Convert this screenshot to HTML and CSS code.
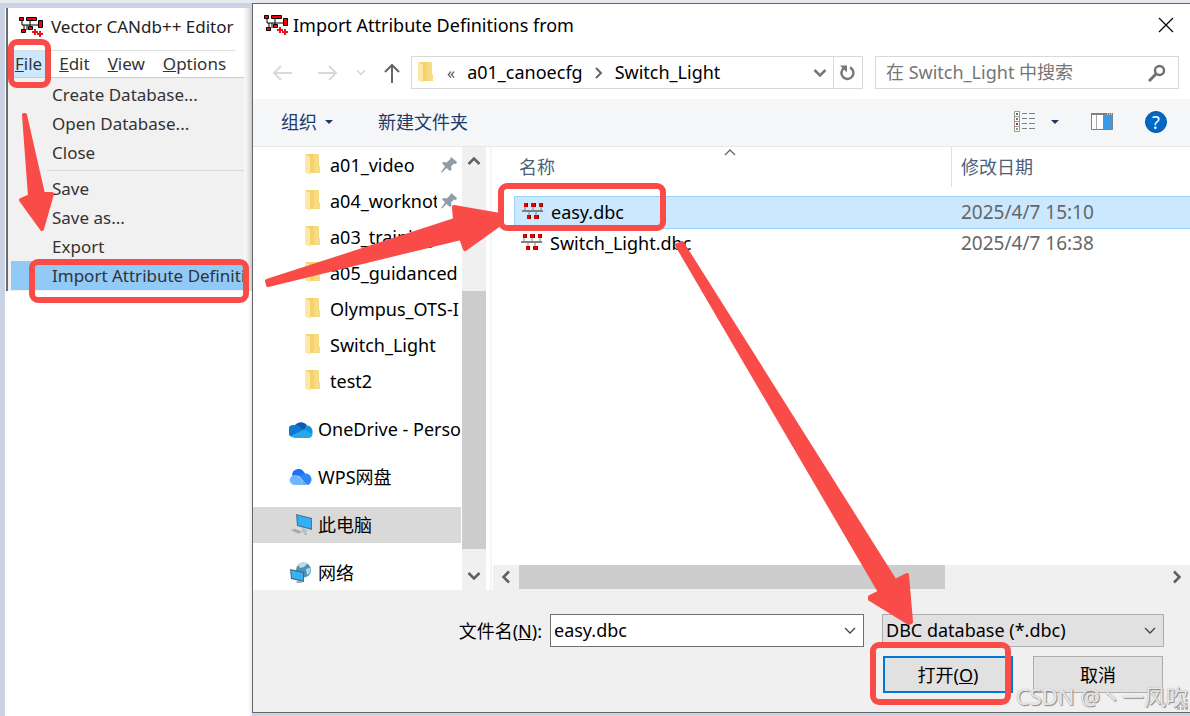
FILE: index.html
```
<!DOCTYPE html>
<html lang="zh-CN">
<head>
    <meta charset="UTF-8">
    <title>Import Attribute Definitions from</title>
    <link rel="stylesheet" href="styles.css">
</head>
<body>
    <svg class="symbols" aria-hidden="true">
        <symbol id="app" viewBox="0 0 24 20">
            <path d="M3 3v5h16M11 3v7M8 8v5M5 13V8" fill="none" stroke="#000" stroke-width="1"/>
            <g fill="#f00" stroke="#000" stroke-width="1">
                <path d="M.5 .5h4v3h-4zM7.500 .5h10v3h-10zM19.500 3.500h4v7h-4zM2.500 12.500h4v3h-4zM9.500 9.500h4v3h-4z"/>
            </g>
            <path d="M13 15h6M16 12v6M18 17h6M21 14v6" fill="none" stroke="#e8141c" stroke-width="2"/>
        </symbol>
        <symbol id="dbc" viewBox="0 0 22 16">
            <path d="M3 4v3M11 4v3M19 4v3M7 9v4M14 9v4" stroke="#808080" stroke-width="1"/>
            <path d="M0 7h21v2H0z" fill="#808080"/>
            <path d="M2 0h4v4H2zM9 0h5v4H9zM17 0h4v4h-4zM5 12h4v4H5zM12 12h5v4h-5z" fill="#e00000"/>
            <path d="M5 0h1v4H5zM13 0h1v4h-1zM20 0h1v4h-1zM8 12h1v4H8zM16 12h1v4h-1z" fill="#800000"/>
        </symbol>
        <symbol id="folder" viewBox="0 0 15 22">
            <path d="M1 0h13v12l1 1v6H1z" fill="#f5d26e"/>
            <path d="M9 0h5v12l1 1v6H9z" fill="#f8dc84"/>
            <path d="M0 0l5 3v18l-5-3z" fill="#ffe8a6"/>
        </symbol>
        <symbol id="pin" viewBox="0 0 16 16">
            <path d="M10 0l6 5-1 2-2-.5-3 3 .5 3-1.500 1.500-3.500-3L1 15.500 0 15l4-5.500L1 6l1.500-1 3 .5 3.500-3z" fill="#8f9ba5"/>
        </symbol>
        <symbol id="down" viewBox="0 0 14 10">
            <path d="M1.500 2L7 7.500 12.500 2" fill="none" stroke="currentColor" stroke-width="2.500"/>
        </symbol>
        <symbol id="thin-down" viewBox="0 0 12 8">
            <path d="M1 1l5 5 5-5" fill="none" stroke="currentColor" stroke-width="1.300"/>
        </symbol>
        <symbol id="caret" viewBox="0 0 8 4">
            <path d="M0 0h8L4 4z" fill="currentColor"/>
        </symbol>
    </svg>

    <div class="desktop">
        <aside class="editor">
            <div class="editor-window">
                <div class="editor-title">
                    <svg class="app-icon"><use href="#app"/></svg>
                    <span>Vector CANdb++ Editor</span>
                </div>
                <nav class="menubar">
                    <button class="menu active"><u>F</u>ile</button>
                    <button class="menu"><u>E</u>dit</button>
                    <button class="menu"><u>V</u>iew</button>
                    <button class="menu"><u>O</u>ptions</button>
                </nav>
                <div class="dropdown">
                    <button>Create Database...</button>
                    <button>Open Database...</button>
                    <button>Close</button>
                    <hr>
                    <button>Save</button>
                    <button>Save as...</button>
                    <button>Export</button>
                    <button class="selected">Import Attribute Definiti</button>
                </div>
            </div>
        </aside>

        <main class="dialog">
            <header class="titlebar">
                <svg class="app-icon"><use href="#app"/></svg>
                <h1>Import Attribute Definitions from</h1>
                <button class="close" aria-label="关闭">
                    <svg width="16" height="16"><path d="M1 1l14 14M15 1L1 15" fill="none" stroke="#000" stroke-width="1.200"/></svg>
                </button>
            </header>

            <div class="navbar">
                <div class="nav-buttons">
                    <button class="off" aria-label="后退"><svg width="20" height="16"><path d="M9 1L2 8l7 7M2 8h18" fill="none" stroke="currentColor" stroke-width="2"/></svg></button>
                    <button class="off" aria-label="前进"><svg width="20" height="16"><path d="M11 1l7 7-7 7M18 8H0" fill="none" stroke="currentColor" stroke-width="2"/></svg></button>
                    <button class="off" aria-label="最近"><svg width="10" height="7"><use href="#down"/></svg></button>
                    <button aria-label="向上"><svg width="16" height="20"><path d="M1 9l7-7 7 7M8 2v18" fill="none" stroke="currentColor" stroke-width="2"/></svg></button>
                </div>
                <div class="address">
                    <svg width="15" height="22"><use href="#folder"/></svg>
                    <span class="crumb-more">«</span>
                    <a href="#">a01_canoecfg</a>
                    <svg class="crumb-sep" width="8" height="12"><path d="M1 1l5 5-5 5" fill="none" stroke="#666" stroke-width="2"/></svg>
                    <a href="#">Switch_Light</a>
                    <button class="history" aria-label="历史"><svg width="14" height="10"><use href="#down"/></svg></button>
                    <button class="refresh" aria-label="刷新">
                        <svg width="18" height="18"><path d="M11 3.500a6 6 0 1 1-6 .5" fill="none" stroke="currentColor" stroke-width="2.500"/><path d="M1 1.500h7v7z" fill="currentColor"/></svg>
                    </button>
                </div>
                <div class="search">
                    <input type="text" placeholder="在 Switch_Light 中搜索" aria-label="搜索">
                    <svg width="18" height="18"><circle cx="11.500" cy="6.500" r="4.500" fill="none" stroke="#707070" stroke-width="2.500"/><path d="M8 10l-7 7" stroke="#707070" stroke-width="3"/></svg>
                </div>
            </div>

            <div class="toolbar">
                <button>组织 <svg width="8" height="4"><use href="#caret"/></svg></button>
                <button>新建文件夹</button>
                <button class="view" aria-label="视图">
                    <svg width="22" height="22">
                        <path d="M.5 .5h5v20h-5zM.5 5.500h5M.5 10.500h5M.5 15.500h5" fill="#fff" stroke="#999"/>
                        <path d="M2 2h2v2H2z" fill="#3b7a85"/><path d="M2 7h2v2H2z" fill="#7b7b40"/>
                        <path d="M2 12h2v2H2z" fill="#c22"/><path d="M2 17h2v2H2z" fill="#8a9a4a"/>
                        <path d="M8 2.500h5M15 2.500h6M8 7.500h5M15 7.500h6M8 12.500h5M15 12.500h6M8 17.500h5M15 17.500h6" stroke="#808080"/>
                    </svg>
                    <svg width="8" height="4"><use href="#caret"/></svg>
                </button>
                <button aria-label="预览窗格">
                    <svg width="22" height="17">
                        <path d="M.5 .5h21v16H.5z" fill="#fff" stroke="#808080"/>
                        <path d="M0 0h22v2H0z" fill="#808080"/><path d="M5.500 2v14" stroke="#aaa"/>
                        <path d="M12 2h9v14h-9z" fill="#3d9ae5"/><path d="M16 1h1M18 1h1M20 1h1" stroke="#fff"/>
                    </svg>
                </button>
                <button class="help" aria-label="帮助">?</button>
            </div>

            <div class="browser">
                <nav class="tree">
                    <a href="#" class="sub"><svg width="15" height="22"><use href="#folder"/></svg><span>a01_video</span><svg class="pin" width="16" height="16"><use href="#pin"/></svg></a>
                    <a href="#" class="sub"><svg width="15" height="22"><use href="#folder"/></svg><span>a04_worknotes</span><svg class="pin" width="16" height="16"><use href="#pin"/></svg></a>
                    <a href="#" class="sub"><svg width="15" height="22"><use href="#folder"/></svg><span>a03_training</span></a>
                    <a href="#" class="sub"><svg width="15" height="22"><use href="#folder"/></svg><span>a05_guidanced</span></a>
                    <a href="#" class="sub"><svg width="15" height="22"><use href="#folder"/></svg><span>Olympus_OTS-I</span></a>
                    <a href="#" class="sub"><svg width="15" height="22"><use href="#folder"/></svg><span>Switch_Light</span></a>
                    <a href="#" class="sub"><svg width="15" height="22"><use href="#folder"/></svg><span>test2</span></a>
                    <a href="#" class="root">
                        <svg width="24" height="18" viewBox="0 0 24 16" preserveAspectRatio="none"><path d="M6 5a7 6 0 0 1 12 0l-4 6z" fill="#0b5cb0"/><path d="M5 4.500a5 5 0 0 1 4 .5l6 4-12 6a5.300 5.300 0 0 1 2-10.500z" fill="#0f78d4"/><path d="M18 5a5.500 5.500 0 0 1 5 8l-8-4z" fill="#1490df"/><path d="M15 8.500l8.500 4a4 4 0 0 1-4 3.500H6a5.500 5.500 0 0 1-4-2z" fill="#28a8ea"/></svg>
                        <span>OneDrive - Personal</span>
                    </a>
                    <a href="#" class="root">
                        <svg width="24" height="16" viewBox="0 0 24 16"><path d="M3 6a6.500 6.500 0 0 1 12-3l7 10-8 3z" fill="#1f6ff0"/><path d="M14 5a5.500 5.500 0 0 1 5 11h-4L9 8z" fill="#2f86f7"/><path d="M5.500 6a5 5 0 0 1 5 2l5.500 8H6A5 5 0 0 1 5.500 6z" fill="#6eb6ff"/><path d="M9 7c3 1 5 7 9 9" fill="none" stroke="#fff" stroke-width=".7"/></svg>
                        <span>WPS网盘</span>
                    </a>
                    <a href="#" class="root current">
                        <svg width="24" height="22" viewBox="0 0 24 22"><path d="M7 0l16 4v12L8 12z" fill="#54748a"/><path d="M8.500 1.500L22 5v9.500L9 11z" fill="#2fb0f8"/><path d="M13 14l5 2-1 3-4-1z" fill="#b2bcc4"/><path d="M1 16l5-1 8 3-5 2z" fill="#bfc5ca"/><path d="M3 16l8 3M5 15l7 3" stroke="#7c858c" stroke-width=".6"/><path d="M15 19l4 1-3 1z" fill="#9aa3a9"/></svg>
                        <span>此电脑</span>
                    </a>
                    <a href="#" class="root">
                        <svg width="24" height="22" viewBox="0 0 24 22"><circle cx="14.500" cy="8" r="7.500" fill="#4c93b5"/><path d="M9 3c3-3 8-3 9-1l-3 3-4 1zM17 7l4-1c1 3-1 6-3 7z" fill="#b8dbe6"/><path d="M1 7l14 3v10L2 17z" fill="#456880"/><path d="M2.200 8.500L14 11v7.500L3 16z" fill="#36b2f5"/><path d="M8 19h4l2 2H7z" fill="#a4afb6"/></svg>
                        <span>网络</span>
                    </a>
                </nav>
                <div class="vscroll">
                    <button aria-label="向上滚动"><svg class="flip" width="14" height="10"><use href="#down"/></svg></button>
                    <div class="vthumb"></div>
                    <button aria-label="向下滚动"><svg width="14" height="10"><use href="#down"/></svg></button>
                </div>
                <section class="files">
                    <table>
                        <colgroup><col class="col-name"><col></colgroup>
                        <thead>
                            <tr>
                                <th><div>名称<svg class="sort" width="12" height="8"><use href="#thin-down"/></svg></div></th>
                                <th><div class="date-head">修改日期</div></th>
                            </tr>
                        </thead>
                        <tbody>
                            <tr class="picked">
                                <td><svg width="22" height="16"><use href="#dbc"/></svg>easy.dbc</td>
                                <td>2025/4/7 15:10</td>
                            </tr>
                            <tr>
                                <td><svg width="22" height="16"><use href="#dbc"/></svg>Switch_Light.dbc</td>
                                <td>2025/4/7 16:38</td>
                            </tr>
                        </tbody>
                    </table>
                    <div class="hscroll">
                        <button aria-label="向左滚动"><svg width="10" height="14"><path d="M8 1.500L2.500 7 8 12.500" fill="none" stroke="currentColor" stroke-width="2.500"/></svg></button>
                        <div class="htrack"><div class="hthumb"></div></div>
                        <button aria-label="向右滚动"><svg width="10" height="14"><path d="M2 1.500L7.500 7 2 12.500" fill="none" stroke="currentColor" stroke-width="2.500"/></svg></button>
                    </div>
                </section>
            </div>

            <footer class="footer">
                <div class="footer-row">
                    <label for="filename">文件名(<u>N</u>):</label>
                    <div class="combo name-box">
                        <input type="text" id="filename" value="easy.dbc">
                        <svg width="12" height="8"><use href="#thin-down"/></svg>
                    </div>
                    <div class="combo type-box">
                        <select aria-label="文件类型"><option>DBC database (*.dbc)</option></select>
                        <svg width="12" height="8"><use href="#thin-down"/></svg>
                    </div>
                </div>
                <div class="footer-row actions">
                    <button class="primary"><span>打开(<u>O</u>)</span></button>
                    <button>取消</button>
                </div>
                <svg class="grip" width="11" height="11"><path d="M8 0h3v3H8zM4 4h3v3H4zM8 4h3v3H8zM0 8h3v3H0zM4 8h3v3H4zM8 8h3v3H8z" fill="#bcbcbc"/></svg>
            </footer>
        </main>

        <!-- step markers drawn over both windows -->
        <svg class="marks" width="1190" height="716" aria-hidden="true">
            <g fill="none" stroke="#f94c48" stroke-width="6">
                <rect x="11" y="42" width="37" height="43" rx="6"/>
                <rect x="32" y="262" width="214" height="38" rx="6"/>
                <rect x="501" y="186" width="162" height="42" rx="6"/>
                <rect x="873" y="645" width="135" height="57" rx="6"/>
            </g>
            <g fill="#f94c48" stroke="#f94c48" stroke-width="4" stroke-linejoin="round">
                <path d="M24 115l1 0 18 79 9 0-10 35-21-29 9-4z"/>
                <path d="M267 281l188-61-1-13 46 8v9l-35 25-4-11-193 47z"/>
                <path d="M677 245l5-2 213 338 12-6 4 47-2 1-39-24 0-2 10-5z"/>
            </g>
        </svg>
        <div class="watermark">CSDN @丶一风吹</div>
    </div>
</body>
</html>
```

FILE: styles.css
```
* {
    box-sizing: border-box;
}

body {
    margin: 0;
    background: #c9d3e4;
    font-family: "Noto Sans", "Noto Sans CJK SC", sans-serif;
    font-size: 18px;
    line-height: 24px;
    color: #000;
}

button,
input,
select {
    font: inherit;
    color: inherit;
    margin: 0;
    padding: 0;
    border: none;
    border-radius: 0;
    background: none;
    outline: none;
}

button {
    display: flex;
    align-items: center;
    justify-content: center;
}

a {
    color: inherit;
    text-decoration: none;
}

svg {
    display: block;
    flex-shrink: 0;
}

.symbols {
    position: absolute;
    width: 0;
    height: 0;
}

.desktop {
    position: relative;
    display: flex;
    min-height: 100vh;
    padding: 3px 0;
    background: linear-gradient(#e6e9ed 3px, #c9d3e4 3px);
    overflow: hidden;
}

.app-icon {
    width: 24px;
    height: 20px;
}

/* editor window behind the dialog */
.editor {
    width: 252px;
    flex-shrink: 0;
    margin: 5px 0 -3px;
    padding-left: 5px;
    background: linear-gradient(to left, #d4d4d4, #fff 9px) 5px 0 no-repeat;
}

.editor-window {
    height: 283px;
    border-left: 2px solid #6c6c70;
    margin-left: 1px;
    font-size: 17px;
    color: #333;
    background: linear-gradient(to left, rgba(0, 0, 0, .15), transparent 9px);
}

.editor-title {
    display: flex;
    align-items: center;
    gap: 8px;
    height: 37px;
    padding-left: 11px;
    color: #222;
    white-space: nowrap;
}

.menubar {
    display: flex;
    height: 33px;
    padding-top: 5px;
    padding-left: 3px;
    border-bottom: 1px solid #ccc;
    margin-right: 8px;
}

.menu {
    padding: 0 9px;
    border-top: 1px solid #ddd;
}

.menu.active {
    padding: 0 4px;
    margin-right: 4px;
    background: #cce8ff;
}

.dropdown {
    height: 213px;
    padding: 2px 0 0 3px;
    margin-right: 8px;
    background: #f1f1f1;
}

.dropdown button {
    width: 100%;
    height: 29px;
    padding-left: 41px;
    justify-content: flex-start;
    white-space: nowrap;
    overflow: hidden;
}

.dropdown hr {
    height: 1px;
    margin: 3px 0 3px 36px;
    border: none;
    background: #d9d9d9;
}

.dropdown .selected {
    background: #91c9f7;
}

/* file dialog */
.dialog {
    flex: 1;
    min-width: 0;
    display: flex;
    flex-direction: column;
    background: #fff;
    border: 1px solid #666;
    border-right: none;
}

.titlebar {
    display: flex;
    align-items: center;
    height: 42px;
    padding: 0 16px 0 11px;
    gap: 5px;
}

.titlebar h1 {
    margin: 0;
    font-size: 18px;
    font-weight: normal;
}

.close {
    margin-left: auto;
}

.navbar {
    display: flex;
    height: 53px;
    padding: 10px 11px 10px 19px;
}

.nav-buttons {
    display: flex;
    align-items: center;
    gap: 18px;
    width: 139px;
    color: #666;
}

.nav-buttons button:nth-child(1) {
    margin-right: 8px;
}

.nav-buttons .off {
    color: #d9d9d9;
}

.address {
    flex: 1;
    display: flex;
    align-items: center;
    border: 1px solid #d9d9d9;
    padding-left: 6px;
}

.address a {
    padding-bottom: 2px;
}

.crumb-more {
    margin: 0 12px 0 14px;
    font-size: 16px;
    color: #555;
}

.crumb-sep {
    margin: 0 12px;
}

.history {
    margin-left: auto;
    margin-right: 6px;
    color: #777;
}

.refresh {
    width: 29px;
    height: 100%;
    border-left: 1px solid #d9d9d9;
    color: #777;
}

.search {
    width: 304px;
    display: flex;
    align-items: center;
    margin-left: 12px;
    padding: 0 12px 0 10px;
    border: 1px solid #d9d9d9;
}

.search input {
    flex: 1;
    min-width: 0;
    padding-bottom: 2px;
}

.search input::placeholder {
    color: #757575;
    opacity: 1;
}

.toolbar {
    display: flex;
    align-items: center;
    height: 48px;
    padding: 0 23px 2px 28px;
    background: #f4f6f8;
    border-bottom: 1px solid #e6e8ea;
    color: #1e3a68;
}

.toolbar button {
    gap: 8px;
    margin-right: 45px;
}

.toolbar .view {
    margin-left: auto;
    margin-right: 32px;
    gap: 15px;
}

.toolbar .view + button {
    margin-right: 32px;
}

.toolbar .help {
    width: 22px;
    height: 22px;
    margin-right: 0;
    border: 1px solid #0a4f9c;
    border-radius: 50%;
    background: #0069c8;
    color: #fff;
}

.browser {
    display: flex;
    height: 443px;
}

.tree {
    width: 209px;
    padding-right: 1px;
    overflow: hidden;
}

.tree a {
    display: flex;
    align-items: center;
    height: 36px;
    white-space: nowrap;
}

.tree .sub {
    padding-left: 52px;
    gap: 10px;
}

.tree .root {
    padding-left: 36px;
    gap: 5px;
    margin-top: 12px;
}

.tree span {
    flex: 1;
    overflow: hidden;
}

.tree .pin {
    margin-left: -6px;
    margin-right: 4px;
}

.tree .current {
    background: #d9d9d9;
}

.vscroll {
    display: flex;
    flex-direction: column;
    width: 24px;
    background: #f0f0f0;
    color: #606060;
}

.vscroll button {
    height: 28px;
}

.flip {
    transform: rotate(180deg);
}

.vthumb {
    height: 258px;
    margin-top: auto;
    margin-bottom: 13px;
    background: #cdcdcd;
}

.files {
    flex: 1;
    min-width: 0;
    display: flex;
    flex-direction: column;
    margin-left: 4px;
    padding-left: 1px;
    border-left: 2px solid #f5f5f5;
}

table {
    width: calc(100% - 21px);
    margin-left: 21px;
    table-layout: fixed;
    border-spacing: 0;
}

.col-name {
    width: 437px;
}

th {
    height: 49px;
    padding: 0;
    vertical-align: top;
    text-align: left;
    font-weight: normal;
    color: #4c607a;
}

th div {
    position: relative;
    display: flex;
    align-items: center;
    height: 40px;
    padding-left: 5px;
}

th .date-head {
    padding-left: 9px;
    border-left: 1px solid #e0e0e0;
}

.sort {
    position: absolute;
    top: 1px;
    left: 210px;
    transform: rotate(180deg);
    color: #666;
}

td {
    height: 30px;
    padding: 0 0 2px 10px;
    font-size: 19px;
    color: #666;
}

td:first-child {
    padding-left: 7px;
    font-size: 18px;
    color: #000;
}

td svg {
    display: inline-block;
    margin-right: 7px;
}

.picked td {
    height: 33px;
    background: #cce8ff;
    border-top: 1px solid #99d1ff;
    border-bottom: 1px solid #99d1ff;
}

.picked td:first-child {
    border-left: 1px solid #99d1ff;
}

.hscroll {
    display: flex;
    height: 25px;
    margin-top: auto;
    padding-bottom: 1px;
    background: #f0f0f0;
    color: #606060;
}

.hscroll button {
    width: 26px;
}

.htrack {
    flex: 1;
}

.hthumb {
    width: 66%;
    height: 100%;
    background: #cdcdcd;
}

.footer {
    position: relative;
    flex: 1;
    padding: 24px 26px 19px 20px;
    background: #f0f0f0;
}

.footer-row {
    display: flex;
    align-items: center;
    justify-content: flex-end;
}

.combo {
    position: relative;
    display: flex;
    align-items: center;
    height: 33px;
    border: 1px solid #707070;
    background: #fff;
}

.combo input,
.combo select {
    width: 100%;
    height: 100%;
    padding: 0 0 2px 3px;
    appearance: none;
}

.combo svg {
    position: absolute;
    right: 7px;
    color: #444;
    pointer-events: none;
}

.name-box {
    width: 314px;
    margin: 0 18px 0 8px;
}

.type-box {
    width: 282px;
    border-color: #adadad;
    background: #e1e1e1;
}

.actions {
    gap: 20px;
    margin-top: 9px;
    padding-right: 1px;
}

.actions button {
    width: 130px;
    height: 37px;
    border: 1px solid #adadad;
    background: #e1e1e1;
}

.actions .primary {
    border: 2px solid #0078d7;
}

.grip {
    position: absolute;
    right: 2px;
    bottom: 2px;
}

/* overlays */
.marks {
    position: absolute;
    top: 0;
    left: 0;
    pointer-events: none;
}

.watermark {
    position: absolute;
    right: 2px;
    bottom: 6px;
    font-size: 22px;
    line-height: 28px;
    color: rgba(255, 255, 255, .8);
    text-shadow: 1px 1px 1px #888, 0 0 1px #999;
    white-space: nowrap;
    pointer-events: none;
}
```
